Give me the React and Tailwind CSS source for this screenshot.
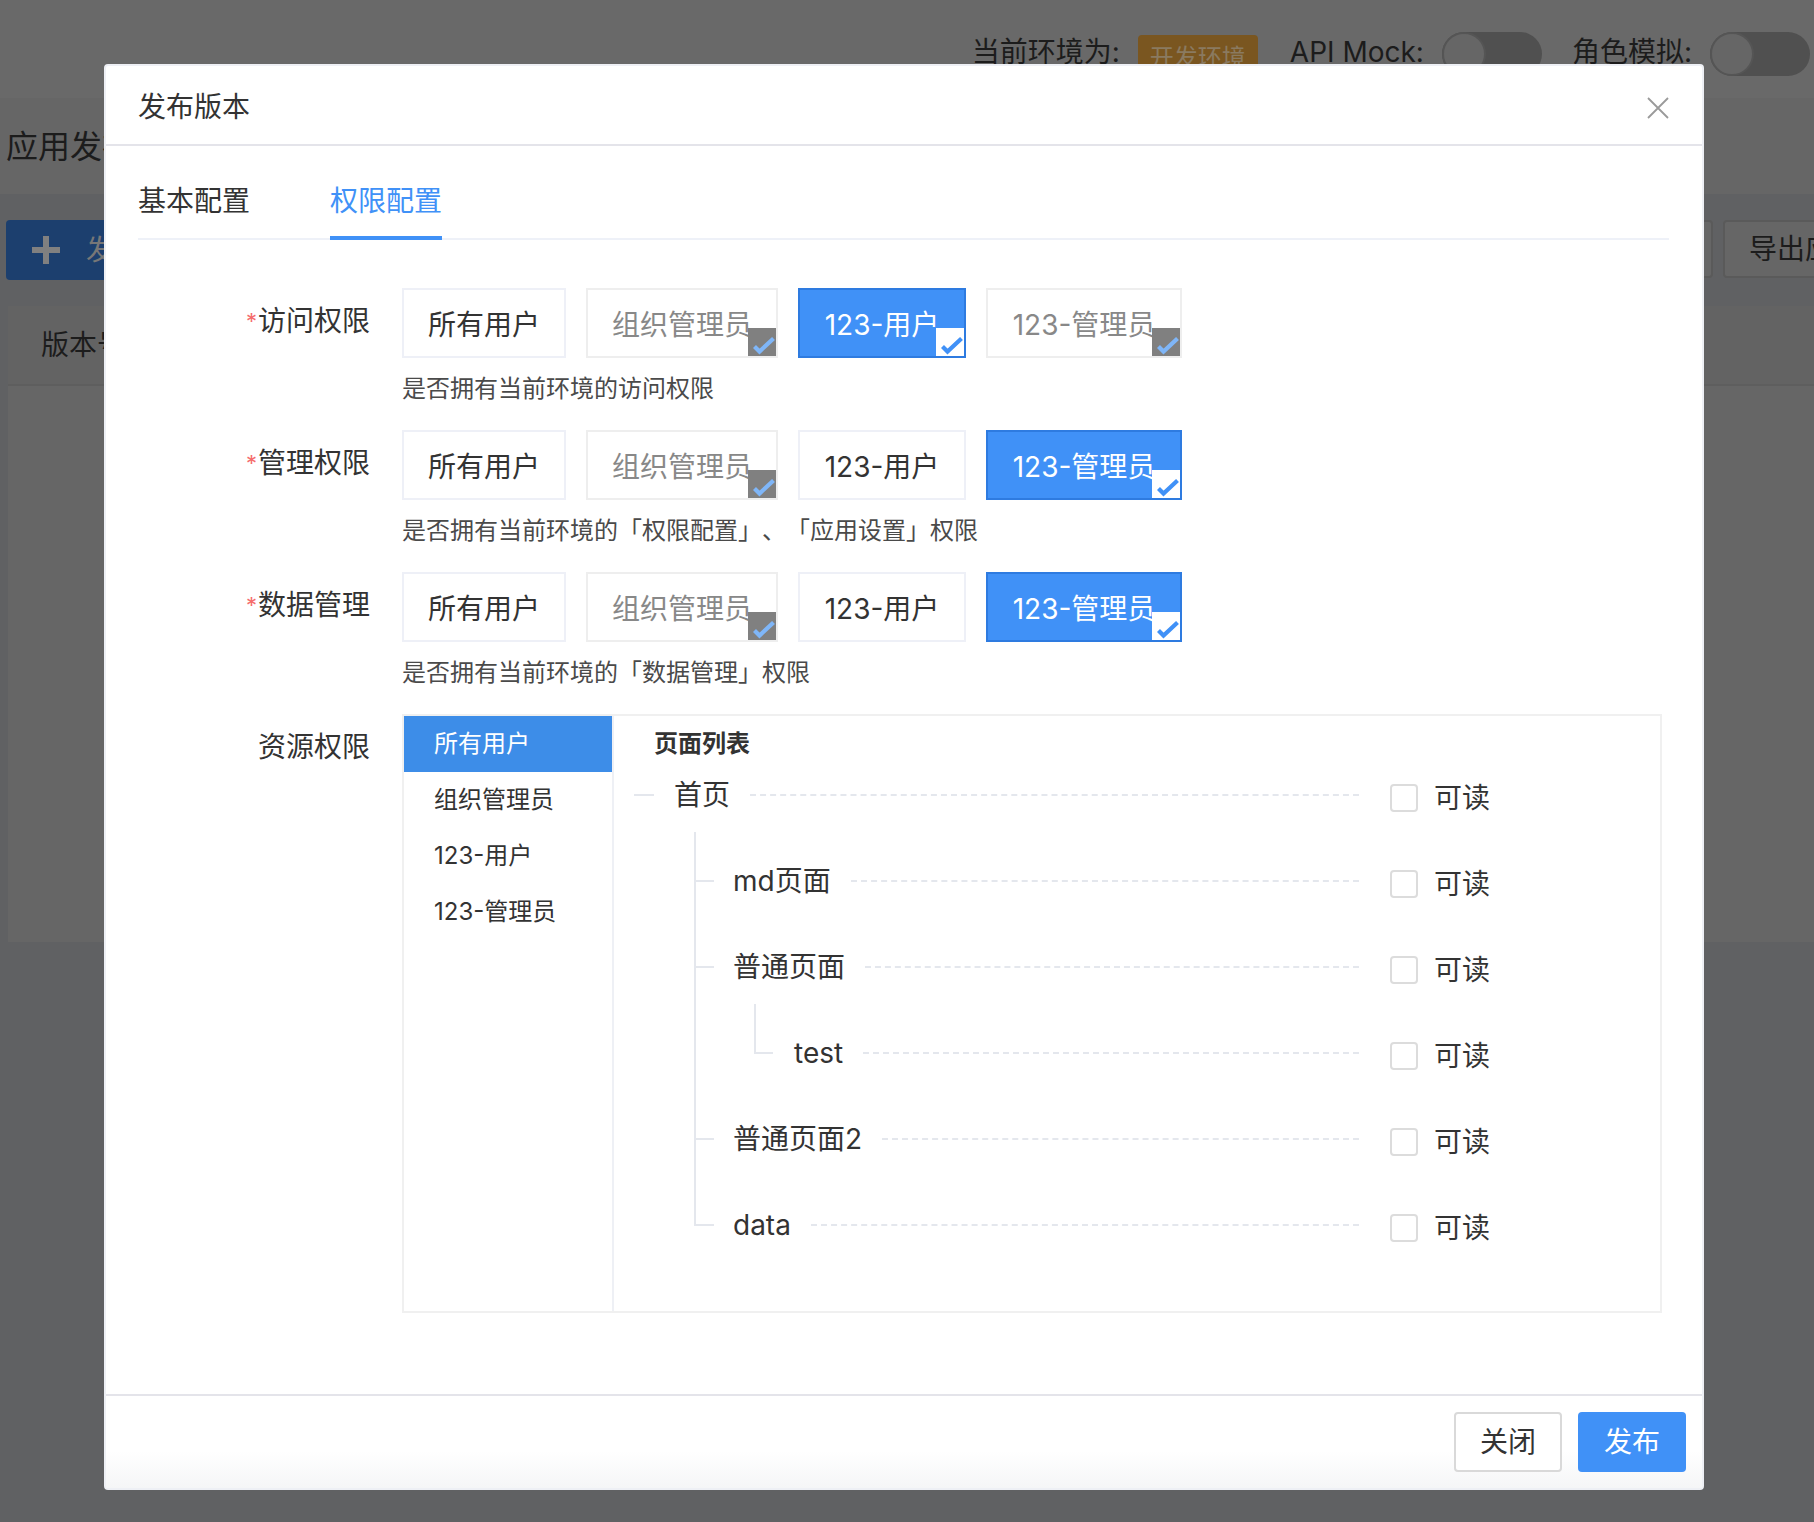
import React from 'react';

const FONT = "font-['Inter','Noto_Sans_CJK_SC',sans-serif]";

const accessRows = [
  { label: '访问权限', desc: '是否拥有当前环境的访问权限', active: '123-用户' },
  { label: '管理权限', desc: '是否拥有当前环境的「权限配置」、「应用设置」权限', active: '123-管理员' },
  { label: '数据管理', desc: '是否拥有当前环境的「数据管理」权限', active: '123-管理员' },
];

const pagesTree = [
  { name: 'md页面', level: 1 },
  { name: '普通页面', level: 1 },
  { name: 'test', level: 2 },
  { name: '普通页面2', level: 1 },
  { name: 'data', level: 1 },
];

const CheckCorner = ({ tone }) => {
  const box = tone === 'active' ? 'bg-white' : 'bg-[#808080]';
  const stroke = tone === 'active' ? '#4091f7' : '#7fb6f8';
  return (
    <span className={`absolute right-0 bottom-0 w-7 h-7 ${box}`}>
      <svg viewBox="0 0 28 28" className="w-7 h-7">
        <polyline points="6.5,18.5 11.5,23.5 25.5,10.5" fill="none" stroke={stroke} strokeWidth="4.2" />
      </svg>
    </span>
  );
};

const Option = ({ text, width, active, disabled }) => {
  let tone = 'bg-white border-[#eef0f7] text-[#333]';
  if (disabled) tone = 'bg-white border-[#eeeeee] text-[#888]';
  if (active) tone = 'bg-[#4091f7] border-[#2e7be0] text-white';
  return (
    <div className={`relative h-[70px] pt-[3px] border-2 flex items-center justify-center text-[28px] leading-10 ${width} ${tone}`}>
      {text}
      {(active || disabled) && <CheckCorner tone={active ? 'active' : 'disabled'} />}
    </div>
  );
};

const FormLabel = ({ required, children }) => (
  <div className="w-[264px] mr-8 shrink-0 pt-[13px] flex justify-end text-[28px] leading-10 text-[#333]">
    {required && <span className="text-[#f56c6c] text-[22px] mr-[1px]">*</span>}
    {children}
  </div>
);

const ReadCheck = () => (
  <>
    <span className="ml-[31px] mt-[6px] w-7 h-7 shrink-0 border-2 border-[#dcdcdc] rounded bg-white" />
    <span className="ml-4 mt-[6px] text-[28px] leading-10 text-[#333]">可读</span>
  </>
);

const TreeRow = ({ name, level }) => {
  const indent = level === 0 ? 'pl-5' : level === 1 ? 'pl-[82px]' : 'pl-[142px]';
  const dash = level === 0 ? 'w-5 mr-5' : level === 1 ? 'w-[18px] mr-[19px]' : 'w-[17px] mr-[21px]';
  return (
    <div className={`relative h-[46px] pr-[170px] flex items-center ${indent}`}>
      {level === 2 && <span className="absolute left-[140px] -top-[26px] bottom-[22px] w-[2px] bg-[#e4e7ed]" />}
      <span className={`h-[2px] shrink-0 bg-[#e4e7ed] ${dash}`} />
      <span className="text-[28px] leading-10 text-[#333] whitespace-nowrap">{name}</span>
      <span className="flex-1 ml-5 border-t-2 border-dashed border-[#e4e7ed]" />
      <ReadCheck />
    </div>
  );
};

const BackSwitch = () => (
  <span className="ml-[18px] mt-1 w-[100px] h-11 rounded-full bg-[#505050] flex">
    <span className="w-11 h-11 rounded-full border-2 border-[#555] bg-[#666]" />
  </span>
);

const BackPage = () => (
  <div className="h-full flex flex-col text-[#1c1c1c]">
    <div className="h-[98px] shrink-0 bg-[#696969] pr-1 pt-[6px] flex items-center justify-end text-[28px]">
      当前环境为:
      <span className="ml-[18px] w-[120px] h-[46px] mt-3 rounded bg-[#7a5620] text-[#8a7a60] text-2xl flex items-center justify-center">开发环境</span>
      <span className="ml-8">API Mock:</span>
      <BackSwitch />
      <span className="ml-[30px]">角色模拟:</span>
      <BackSwitch />
    </div>
    <div className="h-24 shrink-0 bg-[#666] pl-[6px] pt-[2px] flex items-center text-[32px]">应用发布</div>
    <div className="h-28 shrink-0 pl-[6px] -mr-[49px] pt-[26px] flex items-start justify-between">
      <div className="w-[180px] h-[60px] rounded bg-[#1c3f6e] text-[#777] pl-[26px] flex items-center gap-[26px] text-[28px]">
        <span className="relative w-7 h-7">
          <span className="absolute left-0 top-[11px] w-7 h-[6px] bg-[#808080]" />
          <span className="absolute left-[11px] top-0 w-[6px] h-7 bg-[#808080]" />
        </span>
        发布
      </div>
      <div className="flex gap-[10px]">
        <div className="w-[140px] h-[58px] rounded border-2 border-[#5a5a5a] bg-[#666]" />
        <div className="w-[140px] h-[58px] rounded border-2 border-[#5a5a5a] bg-[#666] pl-6 flex items-center text-[28px] whitespace-nowrap">导出应用</div>
      </div>
    </div>
    <div className="ml-2 h-[636px] bg-[#666]">
      <div className="h-20 bg-[#636363] border-b-2 border-[#5e5e5e] pl-[33px] flex items-center text-[28px]">版本号</div>
    </div>
  </div>
);

const App = () => (
  <div className={`relative w-full h-[1522px] overflow-hidden bg-[#606163] [text-spacing-trim:space-all] ${FONT}`}>
    <BackPage />

    {/* dialog */}
    <div className="absolute left-[104px] top-16 w-[1600px] h-[1426px] rounded border-2 border-[#eef0f5] bg-white flex flex-col">
      <div className="h-20 shrink-0 pl-8 pr-[33px] pt-1 border-b-2 border-[#e4e4ea] flex items-center justify-between">
        <span className="text-[28px] leading-10 text-[#333]">发布版本</span>
        <svg viewBox="0 0 22 22" className="w-[22px] h-[22px] mt-[2px]">
          <path d="M1 1 L21 21 M21 1 L1 21" fill="none" stroke="#9a9a9a" strokeWidth="1.8" />
        </svg>
      </div>

      <div className="ml-8 mr-[33px] h-[94px] shrink-0 border-b-2 border-[#eef1f8] flex items-start gap-20 text-[28px] leading-10">
        <div className="h-[94px] pt-[35px] text-[#333]">基本配置</div>
        <div className="h-[94px] pt-[35px] border-b-4 border-[#4091f7] text-[#4091f7]">权限配置</div>
      </div>

      <div className="pt-12 flex-1">
        {accessRows.map((row) => (
          <div key={row.label} className="flex mb-6">
            <FormLabel required>{row.label}</FormLabel>
            <div>
              <div className="flex gap-5">
                <Option text="所有用户" width="w-[164px]" />
                <Option text="组织管理员" width="w-[192px]" disabled />
                <Option text="123-用户" width="w-[168px]" active={row.active === '123-用户'} />
                <Option text="123-管理员" width="w-[196px]" active={row.active === '123-管理员'} disabled={row.label === '访问权限'} />
              </div>
              <div className="mt-[14px] text-2xl leading-[34px] text-[#4a4a4a]">{row.desc}</div>
            </div>
          </div>
        ))}

        <div className="flex">
          <FormLabel>资源权限</FormLabel>
          <div className="w-[1260px] h-[599px] border-2 border-[#f0f0f0] flex">
            <div className="w-[210px] shrink-0 border-r-2 border-[#eef0f5] text-2xl text-[#333]">
              <div className="h-14 w-[208px] pl-[30px] bg-[#3d8de8] text-white flex items-center">所有用户</div>
              <div className="h-14 pl-[30px] flex items-center">组织管理员</div>
              <div className="h-14 pl-[30px] flex items-center">123-用户</div>
              <div className="h-14 pl-[30px] flex items-center">123-管理员</div>
            </div>
            <div className="flex-1">
              <div className="h-14 pl-10 flex items-center text-2xl font-bold text-[#333]">页面列表</div>
              <TreeRow name="首页" level={0} />
              <div className="relative mt-10 flex flex-col gap-10">
                <span className="absolute left-20 -top-[26px] bottom-[22px] w-[2px] bg-[#e4e7ed]" />
                {pagesTree.map((page) => (
                  <TreeRow key={page.name} name={page.name} level={page.level} />
                ))}
              </div>
            </div>
          </div>
        </div>
      </div>

      <div className="h-[94px] shrink-0 pt-4 pr-4 border-t-2 border-[#e4e4ea] bg-linear-to-b from-white from-60% to-[#f5f6f7] flex justify-end gap-4 text-[28px]">
        <button className="w-[108px] h-[60px] rounded border-2 border-[#d9d9d9] bg-white text-[#333]">关闭</button>
        <button className="w-[108px] h-[60px] rounded bg-[#4091f7] text-white">发布</button>
      </div>
    </div>
  </div>
);

export default App;
